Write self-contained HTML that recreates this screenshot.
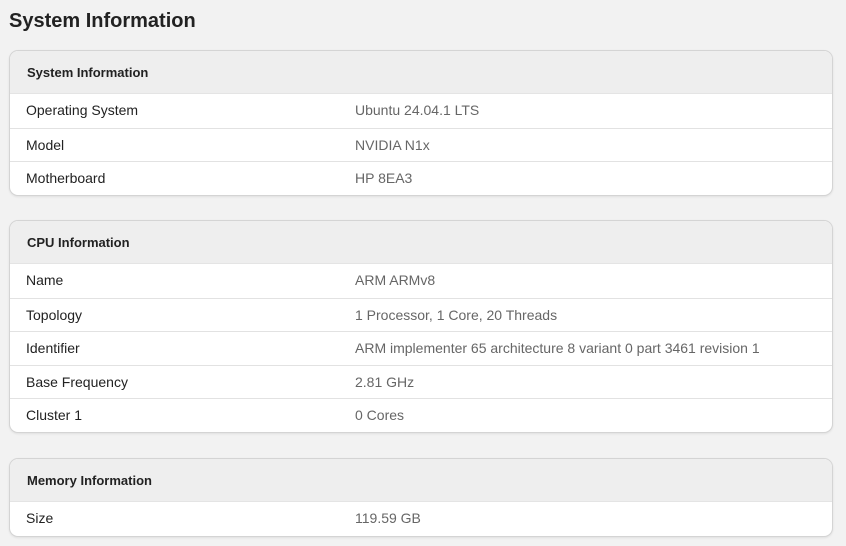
<!DOCTYPE html>
<html><head><style>
body{margin:0;background:#f2f2f2;font-family:"Liberation Sans",sans-serif;width:846px;height:546px;overflow:hidden}
h1{position:absolute;left:9px;top:10px;margin:0;font-size:20px;font-weight:bold;color:#222}
.card{position:absolute;left:9px;width:822px;background:#fff;border:1px solid #d4d4d4;border-radius:9px;overflow:hidden;box-shadow:0 1px 2px rgba(0,0,0,.08)}
.hd{height:43px;background:#eeeeee;font-size:13px;font-weight:bold;color:#222;line-height:43px;padding-left:17px;border-bottom:1px solid #e4e4e4;box-sizing:border-box}
.row{height:33.5px;line-height:32px;font-size:14px;color:#222;border-top:1px solid #e2e2e2;box-sizing:border-box;position:relative;padding-left:16px}
.hd+.row{border-top:none}
.row span{position:absolute;left:345px;color:#666}
</style></head><body>
<h1>System Information</h1>
<div class="card" style="top:50px">
<div class="hd">System Information</div>
<div class="row">Operating System<span>Ubuntu 24.04.1 LTS</span></div>
<div class="row">Model<span>NVIDIA N1x</span></div>
<div class="row">Motherboard<span>HP 8EA3</span></div>
</div>
<div class="card" style="top:220px">
<div class="hd">CPU Information</div>
<div class="row">Name<span>ARM ARMv8</span></div>
<div class="row">Topology<span>1 Processor, 1 Core, 20 Threads</span></div>
<div class="row">Identifier<span>ARM implementer 65 architecture 8 variant 0 part 3461 revision 1</span></div>
<div class="row">Base Frequency<span>2.81 GHz</span></div>
<div class="row">Cluster 1<span>0 Cores</span></div>
</div>
<div class="card" style="top:458px">
<div class="hd">Memory Information</div>
<div class="row">Size<span>119.59 GB</span></div>
</div>
</body></html>
